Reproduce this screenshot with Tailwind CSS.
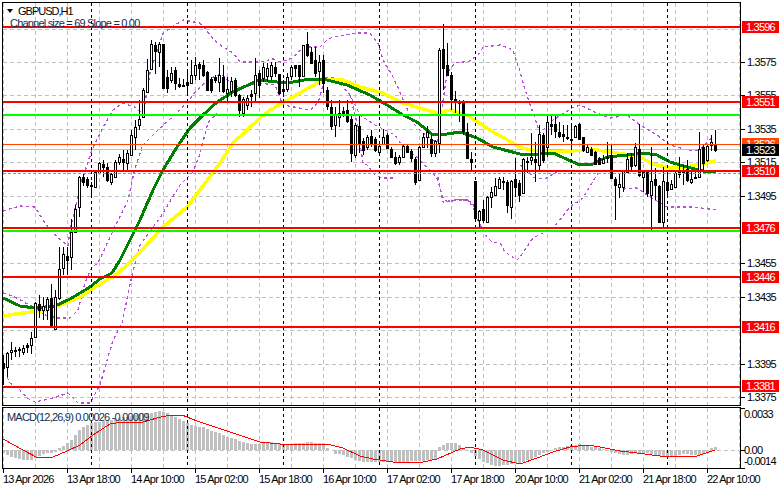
<!DOCTYPE html>
<html>
<head>
<meta charset="utf-8">
<script src="https://cdn.jsdelivr.net/npm/@tailwindcss/browser@4"></script>
</head>
<body class="bg-white">
<div class="flex h-[489px] w-[781px] flex-col overflow-hidden bg-white pt-[2px] pl-[2px] font-['Liberation_Sans',sans-serif] text-[11px] leading-3 tracking-[-0.8px] text-black">

  <div class="flex h-[404px]">
    <div class="relative h-full w-[739px] border border-black">
      <svg id="main" class="block h-[402px] w-[737px]" viewBox="3 3 737 402" shape-rendering="crispEdges"></svg>
      <div class="absolute top-[2px] left-[4px] flex h-3 items-center gap-[2px]">
        <svg class="h-[4px] w-[6px]" viewBox="0 0 6 4"><path d="M0 0H6L3 4Z" fill="#000"/></svg>
        <span class="ml-[3px] tracking-[-1px]">GBPUSD,H1</span>
      </div>
      <div class="absolute top-[14px] left-[7px] h-3 text-[#0f2f55]">Channel size = 69 Slope = 0.00</div>
    </div>
    <div class="relative h-full w-[40px]">
      <div class="absolute top-[54px] left-0 flex h-3 items-center"><span class="h-px w-1 bg-black"></span><span class="ml-[2px]">1.3575</span></div>
      <div class="absolute top-[87px] left-0 flex h-3 items-center"><span class="h-px w-1 bg-black"></span><span class="ml-[2px]">1.3555</span></div>
      <div class="absolute top-[121px] left-0 flex h-3 items-center"><span class="h-px w-1 bg-black"></span><span class="ml-[2px]">1.3535</span></div>
      <div class="absolute top-[154px] left-0 flex h-3 items-center"><span class="h-px w-1 bg-black"></span><span class="ml-[2px]">1.3515</span></div>
      <div class="absolute top-[188px] left-0 flex h-3 items-center"><span class="h-px w-1 bg-black"></span><span class="ml-[2px]">1.3495</span></div>
      <div class="absolute top-[255px] left-0 flex h-3 items-center"><span class="h-px w-1 bg-black"></span><span class="ml-[2px]">1.3455</span></div>
      <div class="absolute top-[289px] left-0 flex h-3 items-center"><span class="h-px w-1 bg-black"></span><span class="ml-[2px]">1.3435</span></div>
      <div class="absolute top-[356px] left-0 flex h-3 items-center"><span class="h-px w-1 bg-black"></span><span class="ml-[2px]">1.3395</span></div>
      <div class="absolute top-[389px] left-0 flex h-3 items-center"><span class="h-px w-1 bg-black"></span><span class="ml-[2px]">1.3375</span></div>

      <div class="absolute top-[19px] left-px h-[12px] w-[37px] bg-[#ff0000] pl-1 text-white">1.3596</div>
      <div class="absolute top-[94px] left-px h-[12px] w-[37px] bg-[#ff0000] pl-1 text-white">1.3551</div>
      <div class="absolute top-[136px] left-px h-[12px] w-[37px] bg-[#ff4500] pl-1 text-white">1.3526</div>
      <div class="absolute top-[142px] left-px h-[12px] w-[37px] bg-black pl-1 text-white">1.3523</div>
      <div class="absolute top-[163px] left-px h-[12px] w-[37px] bg-[#ff0000] pl-1 text-white">1.3510</div>
      <div class="absolute top-[220px] left-px h-[12px] w-[37px] bg-[#ff0000] pl-1 text-white">1.3476</div>
      <div class="absolute top-[269px] left-px h-[12px] w-[37px] bg-[#ff0000] pl-1 text-white">1.3446</div>
      <div class="absolute top-[319px] left-px h-[12px] w-[37px] bg-[#ff0000] pl-1 text-white">1.3416</div>
      <div class="absolute top-[378px] left-px h-[12px] w-[37px] bg-[#ff0000] pl-1 text-white">1.3381</div>
    </div>
  </div>

  <div class="mt-px flex h-[62px]">
    <div class="relative h-full w-[739px] border border-black">
      <svg id="macd" class="block h-[60px] w-[737px]" viewBox="3 408 737 60" shape-rendering="crispEdges"></svg>
      <div class="absolute top-[3px] left-[4px] h-3 text-[#0f2f55]">MACD(12,26,9) 0.00026 -0.00009</div>
    </div>
    <div class="relative h-full w-[40px]">
      <div class="absolute top-[-5px] left-0 flex h-3 items-center"><span class="h-px w-1 bg-black"></span></div>
      <div class="absolute top-[1px] left-0 flex h-3 items-center"><span class="w-1"></span><span class="ml-[-1px]">0.0033</span></div>
      <div class="absolute top-[37px] left-0 flex h-3 items-center"><span class="h-px w-1 bg-black"></span><span class="ml-[-1px]">0.00</span></div>
      <div class="absolute top-[48px] left-0 flex h-3 items-center"><span class="w-1"></span><span class="ml-[-1px]">-0.0014</span></div>
      <div class="absolute top-[55px] left-0 flex h-3 items-center"><span class="h-px w-1 bg-black"></span></div>
    </div>
  </div>

  <div class="relative h-[20px] w-full">
    <div class="absolute top-0 left-[1px] flex flex-col"><span class="h-1 w-px bg-black"></span><span class="whitespace-nowrap">13 Apr 2026</span></div>
    <div class="absolute top-0 left-[65px] flex flex-col"><span class="h-1 w-px bg-black"></span><span class="whitespace-nowrap">13 Apr 18:00</span></div>
    <div class="absolute top-0 left-[129px] flex flex-col"><span class="h-1 w-px bg-black"></span><span class="whitespace-nowrap">14 Apr 10:00</span></div>
    <div class="absolute top-0 left-[193px] flex flex-col"><span class="h-1 w-px bg-black"></span><span class="whitespace-nowrap">15 Apr 02:00</span></div>
    <div class="absolute top-0 left-[257px] flex flex-col"><span class="h-1 w-px bg-black"></span><span class="whitespace-nowrap">15 Apr 18:00</span></div>
    <div class="absolute top-0 left-[321px] flex flex-col"><span class="h-1 w-px bg-black"></span><span class="whitespace-nowrap">16 Apr 10:00</span></div>
    <div class="absolute top-0 left-[385px] flex flex-col"><span class="h-1 w-px bg-black"></span><span class="whitespace-nowrap">17 Apr 02:00</span></div>
    <div class="absolute top-0 left-[449px] flex flex-col"><span class="h-1 w-px bg-black"></span><span class="whitespace-nowrap">17 Apr 18:00</span></div>
    <div class="absolute top-0 left-[513px] flex flex-col"><span class="h-1 w-px bg-black"></span><span class="whitespace-nowrap">20 Apr 10:00</span></div>
    <div class="absolute top-0 left-[577px] flex flex-col"><span class="h-1 w-px bg-black"></span><span class="whitespace-nowrap">21 Apr 02:00</span></div>
    <div class="absolute top-0 left-[641px] flex flex-col"><span class="h-1 w-px bg-black"></span><span class="whitespace-nowrap">21 Apr 18:00</span></div>
    <div class="absolute top-0 left-[705px] flex flex-col"><span class="h-1 w-px bg-black"></span><span class="whitespace-nowrap">22 Apr 10:00</span></div>
  </div>
</div>

<script>
// candles by bar index: high, body top, body bottom, low, white(1)/black(0)
var C=[
[355,363,368,385,0],[352,353,367,377,1],[342,350,352,360,1],[347,350,351,357,1],[347,349,350,357,1],[345,348,352,355,1],[343,345,347,353,0],[332,338,345,354,1],
[302,303,337,338,1],[295,304,310,318,0],[297,306,310,320,1],[297,299,310,320,1],[284,298,327,327,0],[290,297,329,329,1],[247,269,298,300,1],[247,254,268,275,1],
[247,256,260,275,0],[219,232,257,270,1],[205,209,232,233,1],[176,177,207,217,1],[173,177,182,186,0],[177,179,185,188,0],[182,185,186,197,0],[170,172,187,187,1],
[162,163,173,173,1],[160,164,167,177,0],[163,167,180,182,0],[173,174,182,185,1],[160,162,177,177,1],[154,157,162,165,1],[150,159,162,171,0],[150,153,163,172,1],
[130,135,155,156,1],[120,127,137,150,1],[100,119,125,130,1],[88,90,117,118,1],[59,70,92,92,1],[40,44,69,70,1],[42,45,51,74,0],[42,44,52,67,1],
[44,44,88,88,0],[70,77,88,93,0],[67,73,80,83,1],[67,70,83,90,0],[78,84,86,88,0],[79,85,86,87,0],[72,82,85,93,0],[60,75,83,84,1],
[57,65,75,80,1],[62,64,68,80,0],[60,65,75,77,0],[71,72,90,91,0],[77,79,90,93,0],[75,77,80,83,0],[58,75,82,92,1],[65,77,91,93,0],
[77,89,93,103,1],[77,81,91,97,1],[78,80,95,97,0],[94,95,110,117,0],[97,99,113,117,1],[95,98,105,110,1],[90,94,96,107,0],[58,75,93,102,1],
[70,73,85,98,0],[63,67,78,82,1],[63,68,76,82,1],[62,65,76,80,1],[62,67,73,77,0],[74,74,93,95,0],[80,89,91,97,0],[73,77,89,92,1],
[65,67,76,80,1],[65,65,68,77,0],[65,65,76,87,0],[45,45,76,77,1],[32,44,55,57,0],[47,52,63,63,0],[47,60,73,77,0],[55,62,71,85,1],
[55,60,83,93,0],[87,90,106,110,0],[100,107,126,130,0],[107,115,125,137,1],[100,113,117,127,1],[107,111,113,117,0],[100,110,121,123,0],[115,119,153,162,0],
[123,125,155,158,1],[115,126,143,153,0],[138,141,150,155,0],[135,137,147,150,1],[130,136,143,147,0],[137,139,150,152,0],[144,146,152,153,1],[129,137,144,145,1],
[133,135,148,148,0],[147,149,157,157,0],[152,157,163,165,0],[155,157,162,165,1],[144,146,157,157,1],[145,146,152,153,0],[149,151,158,162,0],[157,159,182,185,0],
[146,147,180,180,1],[133,137,147,147,1],[126,132,137,148,1],[135,139,153,157,0],[140,141,153,157,1],[48,50,143,153,1],[24,49,68,90,0],[43,65,75,75,0],
[72,75,99,110,0],[91,99,101,113,0],[100,101,103,122,0],[100,102,131,135,0],[123,132,158,158,0],[152,159,162,170,0],[181,181,218,220,0],[210,211,220,229,1],
[200,209,220,223,0],[196,197,222,222,1],[187,192,197,208,1],[178,186,195,195,1],[177,179,188,189,1],[177,181,182,190,0],[180,182,205,213,0],[180,181,207,219,1],
[158,179,187,197,0],[180,183,195,202,0],[158,159,193,193,1],[157,161,162,173,0],[133,157,160,165,1],[142,159,162,182,0],[125,134,165,170,1],[133,135,160,163,0],
[115,122,147,157,1],[115,124,126,135,0],[115,124,131,138,0],[122,132,136,138,0],[125,134,136,142,0],[125,137,138,140,0],[125,139,140,148,0],[125,126,137,138,1],
[123,124,139,140,0],[137,137,150,152,0],[145,147,152,152,1],[147,149,155,156,0],[151,152,164,165,0],[157,158,164,165,0],[155,159,163,164,1],[142,157,158,163,0],
[145,155,178,178,0],[177,179,185,220,0],[173,184,187,198,1],[170,171,187,192,1],[153,159,172,173,1],[153,157,166,172,0],[143,147,165,167,1],[124,149,175,177,0],
[170,172,177,192,1],[170,171,193,197,0],[147,181,195,230,1],[168,179,185,200,0],[185,186,222,222,0],[167,181,222,228,1],[173,182,190,198,0],[180,184,189,190,1],
[170,173,187,187,1],[157,172,174,178,0],[165,171,172,185,0],[160,169,180,182,0],[170,179,182,184,1],[170,177,178,179,0],[132,149,177,177,1],[145,147,163,172,0],
[145,146,160,162,1],[135,142,145,151,1],[130,144,150,152,0]];

// MACD histogram: bar tip y per bar index (zero line y=450)
var H=[453,455,457,458,459,460,460,460,458,456,454,453,453,452,448,446,443,440,435,430,427,425,423,422,422,421,420,420,419,418,417,417,416,415,414,413,413,413,412,411,412,413,415,417,419,421,423,425,426,427,427,429,431,432,433,435,437,438,439,441,442,443,444,444,444,443,443,442,443,443,444,444,444,443,443,443,442,442,443,443,443,448,450,454,454,455,457,458,460,461,462,462,462,462,462,462,462,462,462,462,462,462,461,461,461,461,460,460,459,447,445,443,443,443,445,448,450,453,456,459,462,463,465,466,466,465,465,464,463,463,462,460,459,457,455,453,452,450,448,447,447,446,445,445,444,445,446,447,447,448,449,450,452,453,454,455,455,454,453,453,453,453,454,455,456,457,457,457,456,455,454,454,455,455,455,454,453,448,447];

var GREEN="3,298 20,306 35,308 55,306 70,299 80,293 90,287 100,279 112,273 120,260 130,240 140,220 153,190 163,170 177,147 190,128 203,115 217,102 233,92 259,80 277,82 293,82 310,79 327,80 347,85 370,95 387,105 403,115 417,122 433,135 447,134 460,132 477,138 493,147 520,154 530,155 553,153 573,162 580,165 593,164 607,157 627,155 643,153 657,155 670,162 687,167 703,171 716,172";
var YELLOW="3,316 23,313 43,311 63,304 80,297 100,284 113,277 127,265 140,252 163,227 187,207 200,190 220,163 233,143 260,118 270,110 293,97 310,87 323,80 343,80 360,87 383,93 403,103 427,110 437,113 450,110 467,115 493,132 520,147 530,150 550,152 567,151 597,150 623,154 640,157 653,164 670,168 687,167 700,164 716,161";
var P=[
"3,211 20,206 35,207 43,220 50,230 63,242 68,246 70,230 82,180 92,150 100,133 113,110 123,103 137,108 143,115 150,73 163,33 183,20 200,23 217,43 233,53 240,62 260,62 273,59 280,62 293,58 303,47 320,47 327,40 333,37 357,33 370,33 378,43 383,60 393,77 400,92 413,123 423,133 437,143 447,73 455,63 470,61 480,53 483,47 500,45 513,50 520,72 525,90 532,110 540,133 553,120 572,108 580,105 597,113 610,118 627,115 640,125 657,135 670,145 687,150 700,150 712,137",
"3,293 13,296 33,307 45,315 57,318 70,318 78,310 85,283 92,267 98,263 112,233 128,200 135,168 143,145 160,128 180,110 200,87 213,77 222,74 230,83 240,88 260,83 275,85 283,105 310,110 318,103 325,78 335,78 350,95 360,115 375,125 395,135 405,150 418,158 437,178 443,198 448,202 460,199 472,202 475,209",
"7,377 10,383 20,390 27,398 35,402 53,398 68,393 78,403 90,403 100,385 113,340 122,323 132,275 140,245 160,218 180,185 193,172 199,157 208,123 217,113",
"350,95 357,123 363,163 367,165 375,175 382,178 395,178",
"438,177 443,202 455,200 468,200 473,207 479,223 487,237 492,242 500,243 505,252 517,260 520,257 533,238 553,228 570,207 583,198 598,173",
"520,165 535,178 545,179 557,172",
"623,189 637,188 647,195 667,207 693,207 717,210"];
var M="3,439 23,450 38,458 53,457 67,451 80,445 93,435 110,424 123,422 143,422 157,418 170,415 182,415 197,421 227,431 260,442 280,444 327,444 343,448 360,456 373,459 393,462 423,462 437,459 460,449 470,447 483,450 503,460 520,464 537,458 553,452 570,447 587,445 600,447 620,451 637,453 660,456 673,457 697,456 715,450";

function vGrid(top,bot){var o='';
  for(var x=3.5;x<740;x+=32)o+='<line x1="'+x+'" x2="'+x+'" y1="'+top+'" y2="'+bot+'" stroke="#c0c0c0" stroke-dasharray="4 3"/>';
  return o;}
function vBlack(top,bot){var o='';
  for(var x=91.5;x<740;x+=96)o+='<line x1="'+x+'" x2="'+x+'" y1="'+top+'" y2="'+bot+'" stroke="#000" stroke-dasharray="3 3"/>';
  return o;}
function hLine(y,c,w,d){return '<line x1="3" x2="740" y1="'+y+'" y2="'+y+'" stroke="'+c+'" stroke-width="'+w+'"'+(d?' stroke-dasharray="'+d+'"':'')+'/>';}
function poly(p,c,w,d){return '<polyline points="'+p+'" fill="none" stroke="'+c+'" stroke-width="'+w+'" stroke-linejoin="round"'+(d?' stroke-dasharray="'+d+'"':'')+'/>';}

var s=vGrid(3,405);
[29,62,95,129,162,196,230,263,297,330,364,397].forEach(function(y){s+=hLine(y+.5,'#c0c0c0',1,'4 3');});
P.forEach(function(p){s+=poly(p,'#b44fd6',1.3,'3 3');});
s+=hLine(149.5,'#c0c0c0',1);
s+=poly(YELLOW,'#ffff00',3.5)+poly(GREEN,'#008000',3);
s+=vBlack(3,405);
C.forEach(function(c,k){
  var x=3.5+4*k;
  s+='<line x1="'+x+'" x2="'+x+'" y1="'+c[0]+'" y2="'+c[3]+'" stroke="#000"/>';
  s+='<rect x="'+(x-1)+'" y="'+(c[1]+.5)+'" width="2" height="'+Math.max(c[2]-c[1],1)+'" fill="'+(c[4]?'#fff':'#000')+'" stroke="#000"/>';
});
s+=hLine(27,'#ff0000',2)+hLine(102,'#ff0000',2)+hLine(171,'#ff0000',2)+hLine(228,'#ff0000',2)+hLine(277,'#ff0000',2)+hLine(327,'#ff0000',2)+hLine(387,'#ff0000',2);
s+=hLine(115,'#00ff00',2)+hLine(231,'#00ff00',2)+hLine(173.5,'#00ff00',1,'3 2')+hLine(144.5,'#ff4500',1);
document.getElementById('main').innerHTML=s;

var m=vGrid(408,468)+hLine(450.5,'#c0c0c0',1,'4 3');
H.forEach(function(y,k){var x=2+4*k,a=Math.min(y,450),b=Math.max(y,450);
  m+='<rect x="'+x+'" y="'+a+'" width="3" height="'+(b-a)+'" fill="#c0c0c0"/>';});
m+=vBlack(408,468)+poly(M,'#ff0000',1);
document.getElementById('macd').innerHTML=m;
</script>
</body>
</html>
